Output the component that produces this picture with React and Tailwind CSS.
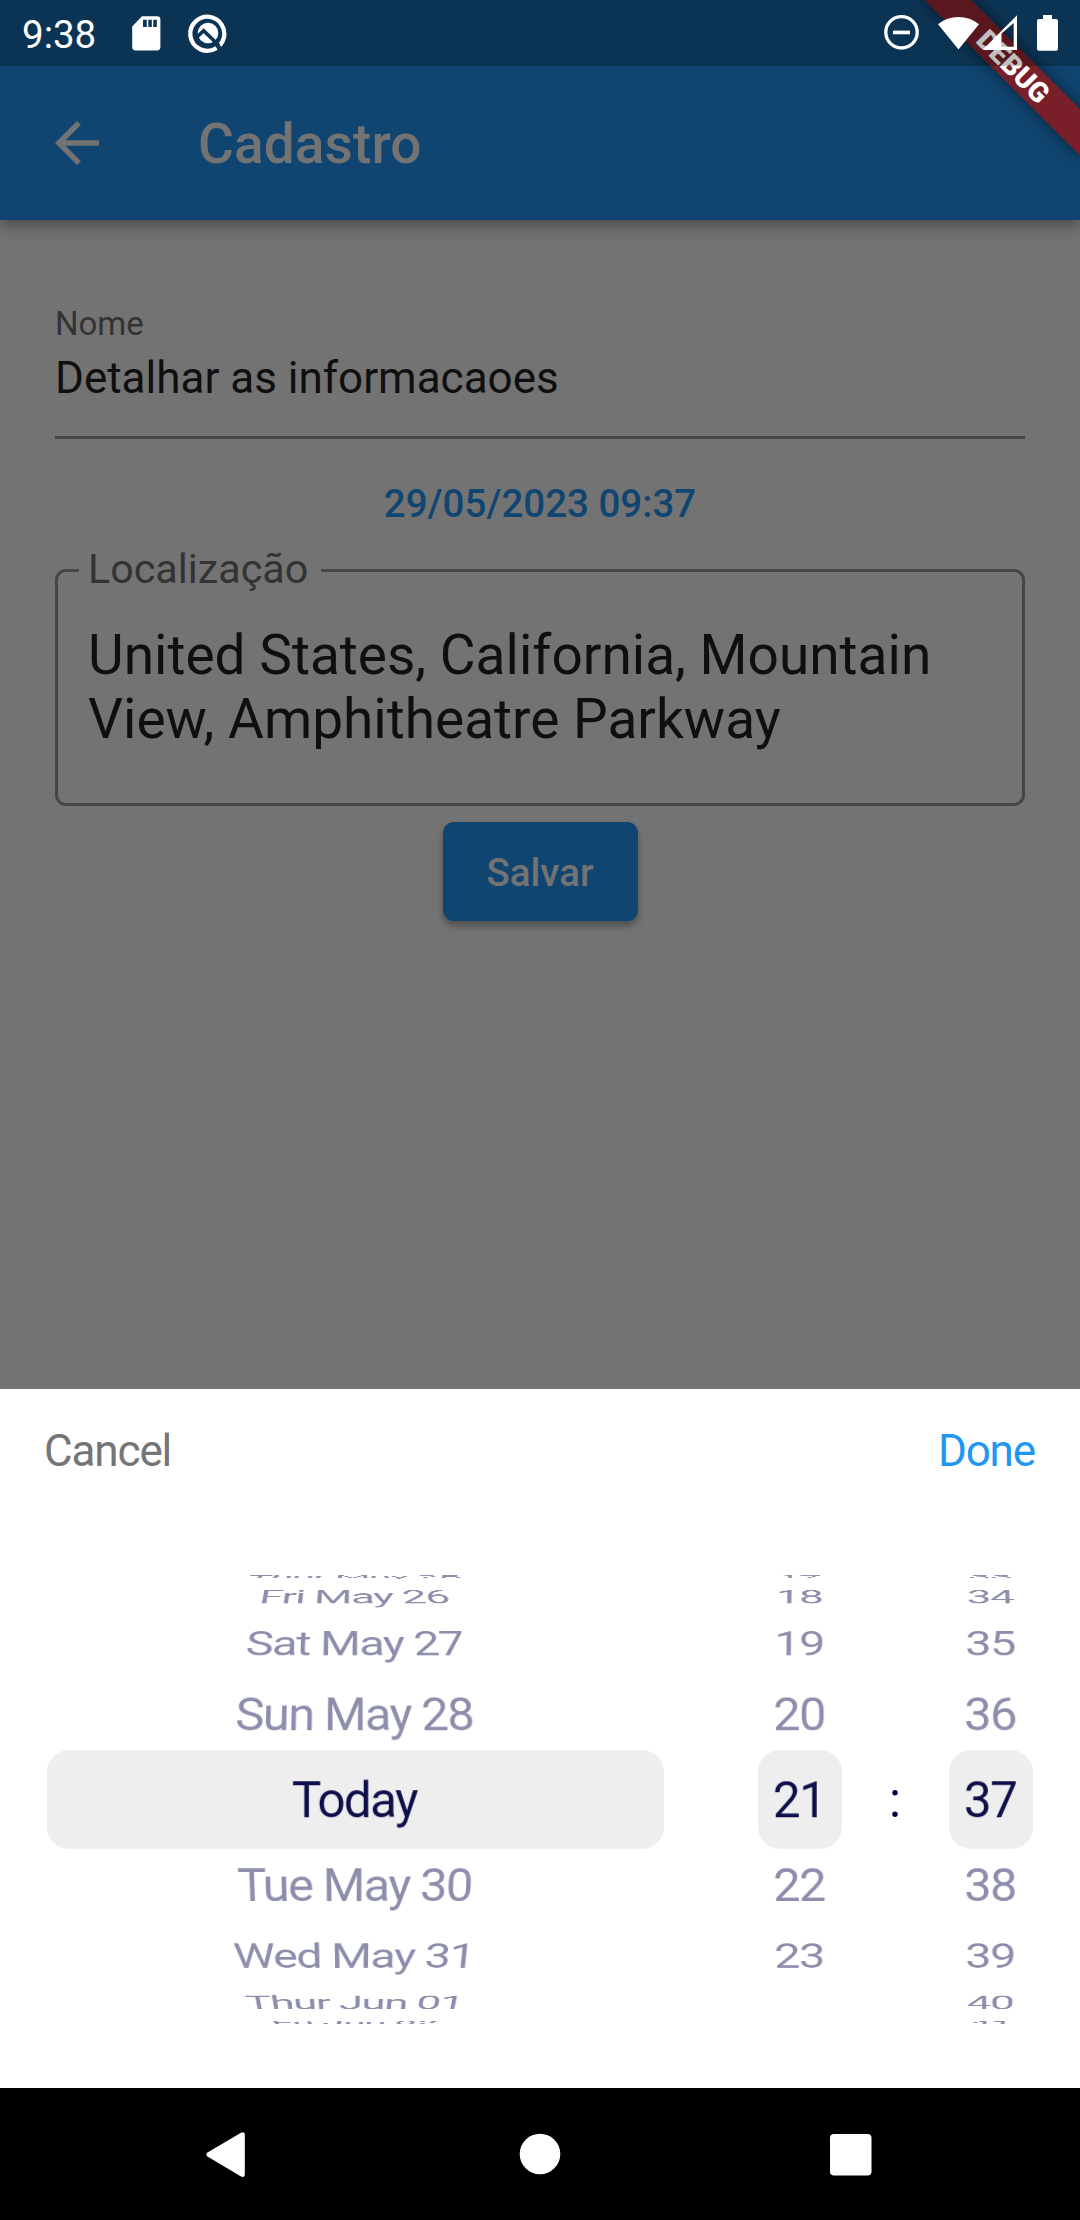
import React from "react";

const DAYS = ["Thur May 25", "Fri May 26", "Sat May 27", "Sun May 28", "Today", "Tue May 30", "Wed May 31", "Thur Jun 01", "Fri Jun 02"];
const HOURS = ["17", "18", "19", "20", "21", "22", "23"];
const MINUTES = ["33", "34", "35", "36", "37", "38", "39", "40", "41"];

const STEP = 0.3089;
const RADIUS = 285.4;

function Wheel({ items, className }) {
  return (
    <div className={`grid h-full items-center justify-items-center p-[22px] ${className}`}>
      {items.map((item, i) => {
        const angle = (4 - i) * STEP;
        return (
          <span
            key={item}
            className={`col-start-1 row-start-1 flex h-[99px] items-center whitespace-nowrap pt-[2px] text-[49.5px] tracking-[-1.65px] ${i === 4 ? "text-[#000046]" : "text-[#8d8dac]"}`}
            style={{
              transform: `translate(-1.2px, 0.2px) perspective(916.67px) translateZ(${-RADIUS}px) rotateX(${angle}rad) translateZ(${RADIUS}px)`,
            }}
          >
            {item}
          </span>
        );
      })}
      <div className="z-10 col-start-1 row-start-1 h-[99px] w-full px-[24.75px]">
        <div className="h-full rounded-[22px] bg-[#747474]/12" />
      </div>
    </div>
  );
}

function StatusBar() {
  return (
    <div className="relative flex h-[66px] items-start bg-black/25 text-white">
      <span className="ml-[22px] mt-[12px] w-[103px] text-[38.5px] leading-[46px]">9:38</span>
      <svg className="mt-[10px] h-[46px] w-[46px]" viewBox="0 0 46 46">
        <path fillRule="evenodd" fill="white" d="M17 6.3h15a3.4 3.4 0 0 1 3.4 3.4v27.4a3.4 3.4 0 0 1-3.4 3.4H10.600a3.400 3.400 0 0 1-3.400-3.400V16.500zM18 9.700v7.300h3.800V9.700zM23.300 9.700v7.300h3.500V9.700zM28.300 9.700v7.300h3.500V9.700z" />
      </svg>
      <svg className="ml-[13.500px] mt-[10px] h-[46px] w-[46px]" viewBox="0 0 46 46">
        <path d="M34.800 35.200A17 17 0 1 0 31.500 38" fill="none" stroke="white" strokeWidth="4.300" />
        <circle cx="23" cy="23" r="10.300" fill="white" />
        <path d="M11.500 27.500L18.600 20.800L34 35.500" fill="none" stroke="#0b3453" strokeWidth="3.600" />
      </svg>
      <div className="flex-1" />
      <svg className="h-[66px] w-[200px]" viewBox="880 0 200 66">
        <circle cx="901.500" cy="32.300" r="15.700" fill="none" stroke="white" strokeWidth="3.300" />
        <path d="M893 30.600h17v3.700h-17z" fill="white" />
        <path d="M958.500 49.500L938 24.200a33 33 0 0 1 41 0z" fill="white" />
        <path fillRule="evenodd" d="M982.500 50L1017 15.300V50zM1001.500 33.500V46.800H1013.700V23z" fill="white" />
        <path d="M1043 15h9v4h4a2 2 0 0 1 2 2v27.700a2 2 0 0 1-2 2h-17a2 2 0 0 1-2-2V21a2 2 0 0 1 2-2h4z" fill="white" />
      </svg>
    </div>
  );
}

function DebugBanner() {
  return (
    <div className="absolute left-[1080px] top-0 h-0 w-0 rotate-45">
      <div className="-ml-[110px] flex h-[110px] w-[220px] items-end">
        <div className="flex h-[33px] w-[220px] shrink-0 items-center justify-center bg-[#781f29] pt-[1px] text-[28px] font-black leading-[33px] text-white shadow-[0_0_16px_rgba(0,0,0,0.5)]">
          DEBUG
        </div>
      </div>
    </div>
  );
}

export default function App() {
  return (
    <div className="relative flex h-[2220px] w-[1080px] flex-col overflow-hidden bg-[#737373] font-['Roboto',sans-serif]">
      <header className="relative z-10 h-[220px] bg-[#0f4570] shadow-[0_6px_14px_rgba(0,0,0,0.35)]">
        <DebugBanner />
        <StatusBar />
        <div className="flex h-[154px] items-center">
          <svg className="ml-[44px] h-[66px] w-[66px]" viewBox="0 0 24 24">
            <path fill="#737373" d="M20 11H7.830l5.590-5.590L12 4l-8 8 8 8 1.410-1.410L7.830 13H20v-2z" />
          </svg>
          <h1 className="ml-[88px] pt-[2px] text-[55px] font-medium tracking-[0.100px] text-[#737373]">Cadastro</h1>
        </div>
      </header>

      <main className="flex h-[1169px] flex-col px-[55px] pt-[84px]">
        <label className="h-[48px] text-[33px] leading-[40px] text-[#333333]">Nome</label>
        <div className="h-[87px] border-b-[3px] border-[#464646] text-[44px] leading-[52px] text-[#0f0f0f]">
          Detalhar as informacaoes
        </div>
        <div className="mt-[42px] text-center text-[38.5px] font-medium leading-[46px] text-[#0f4570]">29/05/2023 09:37</div>
        <div className="relative mt-[42px] h-[237px] shrink-0 rounded-[11px] border-[3px] border-[#464646] pl-[30px] pt-[51px] text-[55px] leading-[64px] text-[#0f0f0f]">
          <span className="absolute -top-[27px] left-[21px] w-[242px] bg-[#737373] pl-[9px] text-[41.25px] leading-[48px] text-[#333333]">Localização</span>
          United States, California, Mountain
          <br />
          View, Amphitheatre Parkway
        </div>
        <button className="mt-[16px] h-[99px] w-[195px] shrink-0 self-center rounded-[11px] bg-[#0f4570] pt-[2px] text-[38.5px] font-medium text-[#737373] shadow-[0_5px_7px_rgba(0,0,0,0.3)]">
          Salvar
        </button>
      </main>

      <section className="z-10 flex h-[699px] flex-col bg-white">
        <div className="flex h-[121px] items-center justify-between pl-[44px] pr-[45px] pt-[2px] text-[44px] tracking-[-1.13px]">
          <span className="text-[#757575]">Cancel</span>
          <span className="text-[#2196f3]">Done</span>
        </div>
        <div className="flex h-[578px] items-center">
          <Wheel items={DAYS} className="w-[711px]" />
          <Wheel items={HOURS} className="w-[178px]" />
          <span className="w-[13px] pt-[2px] text-[49.5px] text-[#000046]">:</span>
          <Wheel items={MINUTES} className="w-[178px]" />
        </div>
      </section>

      <nav className="flex h-[132px] bg-black">
        <svg className="h-[132px] w-[1080px]" viewBox="0 0 1080 132" fill="white">
          <path d="M207.500 64.500L241 44.700Q244.800 43 244.800 47V86Q244.800 90 241 88.500L207.500 68.500Q205 66.500 207.500 64.500z" />
          <circle cx="540" cy="66" r="20.300" />
          <rect x="830" y="46" width="41.500" height="41.500" rx="4" />
        </svg>
      </nav>
    </div>
  );
}
